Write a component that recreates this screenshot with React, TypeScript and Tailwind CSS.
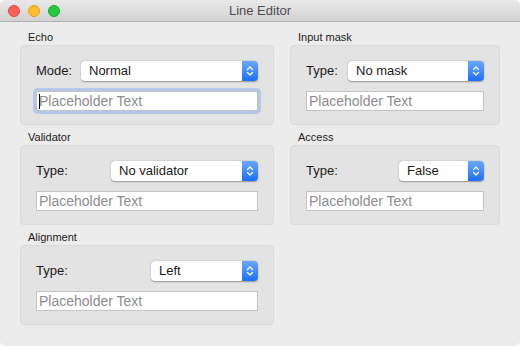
import React from 'react';

type Group = {
  title: string;
  label: string;
  value: string;
  selectWidth: string;
  focused?: boolean;
};

const left: Group[] = [
  { title: 'Echo', label: 'Mode:', value: 'Normal', selectWidth: 'w-[177px]', focused: true },
  { title: 'Validator', label: 'Type:', value: 'No validator', selectWidth: 'w-[147px]' },
  { title: 'Alignment', label: 'Type:', value: 'Left', selectWidth: 'w-[107px]' },
];

const right: Group[] = [
  { title: 'Input mask', label: 'Type:', value: 'No mask', selectWidth: 'w-[136px]' },
  { title: 'Access', label: 'Type:', value: 'False', selectWidth: 'w-[85px]' },
];

function Stepper() {
  return (
    <div className="w-4 h-full rounded-r-[4px] bg-gradient-to-b from-[#69a8fc] to-[#186ef6] flex items-center justify-center">
      <svg width="8" height="12" viewBox="0 0 8 12" fill="none" stroke="white" strokeWidth="1.3" strokeLinecap="round" strokeLinejoin="round">
        <path d="M1.5 4.5 L4 2 L6.5 4.5" />
        <path d="M1.5 7.5 L4 10 L6.5 7.5" />
      </svg>
    </div>
  );
}

function Box({ g }: { g: Group }) {
  return (
    <div>
      <div className="h-5 flex items-end pb-px pl-2 text-[11px] leading-[13px] text-[#1c1c1c]">{g.title}</div>
      <div className="h-20 rounded-[4px] bg-[#e3e3e3] border border-[#dadada] px-[15px] pt-[15px] flex flex-col gap-[10px]">
        <div className="flex items-center justify-between h-5">
          <span className="text-[13px] text-[#1a1a1a]">{g.label}</span>
          <div className={`${g.selectWidth} h-5 flex rounded-[4px] bg-white shadow-[0_0.5px_1.5px_rgba(0,0,0,0.35)]`}>
            <span className="flex-1 pl-2 text-[13px] leading-5 text-[#1a1a1a]">{g.value}</span>
            <Stepper />
          </div>
        </div>
        <div
          className={`h-5 bg-white border border-[#c4c4c4] flex items-center pl-[2px] text-[14px] text-[#8d8d8d] ${
            g.focused ? 'ring-[3px] ring-[#b3c8e8] rounded-[2px]' : ''
          }`}
        >
          {g.focused && <span className="w-px h-[15px] bg-black -mr-px"></span>}
          Placeholder Text
        </div>
      </div>
    </div>
  );
}

export default function App() {
  return (
    <div className="w-[520px] h-[346px] bg-white" style={{ fontFamily: '"Liberation Sans", Arial, sans-serif' }}>
      <div className="w-full h-full rounded-[5px] overflow-hidden bg-[#ececec] flex flex-col">
        {/* Title bar */}
        <div className="relative h-[22px] shrink-0 bg-gradient-to-b from-[#e9e9e9] to-[#d2d2d2] border-b border-[#b0b0b0] flex items-center justify-center">
          <div className="absolute left-2 top-[5px] flex gap-2">
            <span className="w-3 h-3 rounded-full bg-[#fd5f57] border border-[#e2463f]"></span>
            <span className="w-3 h-3 rounded-full bg-[#febc2e] border border-[#e1a116]"></span>
            <span className="w-3 h-3 rounded-full bg-[#28c840] border border-[#12ac28]"></span>
          </div>
          <span className="text-[13px] text-[#4c4c4c]">Line Editor</span>
        </div>

        {/* Content */}
        <div className="flex gap-4 px-5 pt-[3px]">
          <div className="w-[254px] flex flex-col">
            {left.map((g) => (
              <Box key={g.title} g={g} />
            ))}
          </div>
          <div className="w-[210px] flex flex-col">
            {right.map((g) => (
              <Box key={g.title} g={g} />
            ))}
          </div>
        </div>
      </div>
    </div>
  );
}
